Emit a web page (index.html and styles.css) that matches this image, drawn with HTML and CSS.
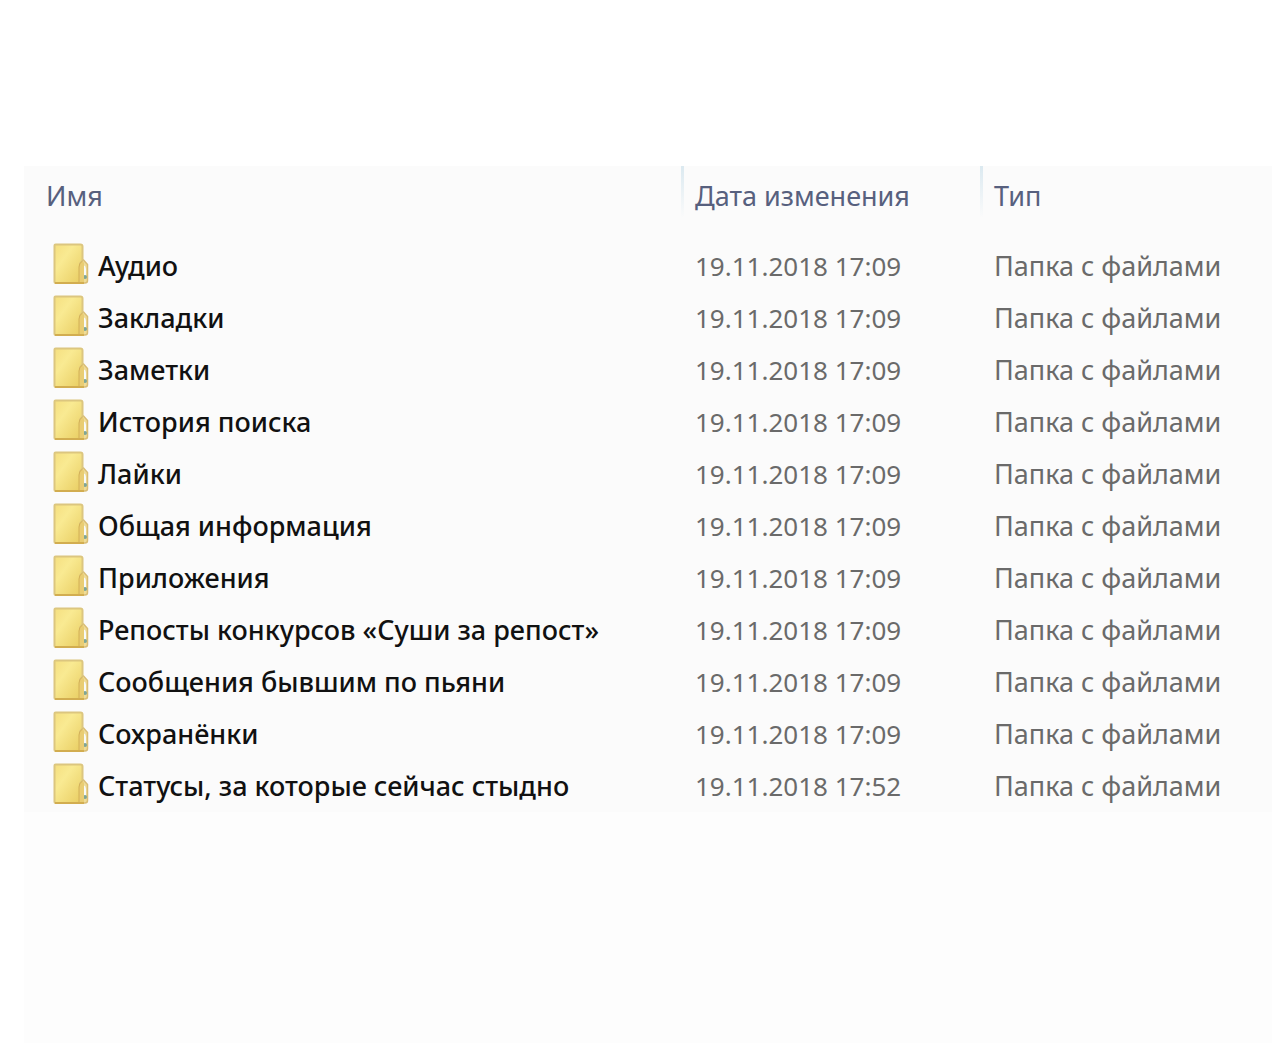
FILE: index.html
```html
<!DOCTYPE html>
<html lang="ru">
<head>
<meta charset="utf-8">
<meta name="viewport" content="width=device-width, initial-scale=1">
<title>Папки</title>
<link rel="stylesheet" href="styles.css">
</head>
<body>
<svg class="defs" aria-hidden="true">
  <defs>
    <linearGradient id="cover" x1="0" y1="0" x2="1" y2="1">
      <stop offset="0" stop-color="#f5df80"/>
      <stop offset="0.35" stop-color="#f9ea92"/>
      <stop offset="1" stop-color="#e8cc60"/>
    </linearGradient>
    <symbol id="folder" viewBox="0 0 36 42">
      <path d="M27 17h3.500l4 4.500v16q0 2.500-2.500 2.500h-5z" fill="#efdc98" stroke="#d9bd75" stroke-width="1.500"/>
      <path d="M30.500 22q2.500 1 2.500 4v8h-2.500z" fill="#f7fafa"/>
      <circle cx="32" cy="34" r="2" fill="#7fa596"/>
      <path d="M2.500 1.500h25q2 0 2 2v14l-2.500 3v19.500h-24.500q-1 0-1-1v-36.500q0-1 1-1z" fill="url(#cover)" stroke="#dcc67f" stroke-width="2"/>
      <path d="M26 40v-16q0-4 3.500-6l1.500 2v20z" fill="#e9cd73"/>
      <path d="M26 40v-16q0-4 3.500-6" fill="none" stroke="#d3b056"/>
      <path d="M2 40h29" fill="none" stroke="#d2ad50" stroke-width="2"/>
    </symbol>
  </defs>
</svg>
<main class="window">
  <div class="pane">
    <table class="files">
      <colgroup><col class="col-name"><col class="col-date"><col></colgroup>
      <thead>
        <tr><th scope="col">Имя</th><th scope="col">Дата изменения</th><th scope="col">Тип</th></tr>
      </thead>
      <tbody>
        <tr><td><div class="name"><svg class="icon" aria-hidden="true"><use href="#folder"/></svg>Аудио</div></td><td class="date">19.11.2018 17:09</td><td>Папка с файлами</td></tr>
        <tr><td><div class="name"><svg class="icon" aria-hidden="true"><use href="#folder"/></svg>Закладки</div></td><td class="date">19.11.2018 17:09</td><td>Папка с файлами</td></tr>
        <tr><td><div class="name"><svg class="icon" aria-hidden="true"><use href="#folder"/></svg>Заметки</div></td><td class="date">19.11.2018 17:09</td><td>Папка с файлами</td></tr>
        <tr><td><div class="name"><svg class="icon" aria-hidden="true"><use href="#folder"/></svg>История поиска</div></td><td class="date">19.11.2018 17:09</td><td>Папка с файлами</td></tr>
        <tr><td><div class="name"><svg class="icon" aria-hidden="true"><use href="#folder"/></svg>Лайки</div></td><td class="date">19.11.2018 17:09</td><td>Папка с файлами</td></tr>
        <tr><td><div class="name"><svg class="icon" aria-hidden="true"><use href="#folder"/></svg>Общая информация</div></td><td class="date">19.11.2018 17:09</td><td>Папка с файлами</td></tr>
        <tr><td><div class="name"><svg class="icon" aria-hidden="true"><use href="#folder"/></svg>Приложения</div></td><td class="date">19.11.2018 17:09</td><td>Папка с файлами</td></tr>
        <tr><td><div class="name"><svg class="icon" aria-hidden="true"><use href="#folder"/></svg>Репосты конкурсов «Суши за репост»</div></td><td class="date">19.11.2018 17:09</td><td>Папка с файлами</td></tr>
        <tr><td><div class="name"><svg class="icon" aria-hidden="true"><use href="#folder"/></svg>Сообщения бывшим по пьяни</div></td><td class="date">19.11.2018 17:09</td><td>Папка с файлами</td></tr>
        <tr><td><div class="name"><svg class="icon" aria-hidden="true"><use href="#folder"/></svg>Сохранёнки</div></td><td class="date">19.11.2018 17:09</td><td>Папка с файлами</td></tr>
        <tr><td><div class="name"><svg class="icon" aria-hidden="true"><use href="#folder"/></svg>Статусы, за которые сейчас стыдно</div></td><td class="date">19.11.2018 17:52</td><td>Папка с файлами</td></tr>
      </tbody>
    </table>
  </div>
</main>
</body>
</html>
```
FILE: styles.css
```css
body {
  margin: 0;
  background: #fff;
  font-family: "Noto Sans", "Open Sans", sans-serif;
  font-size: 27px;
  line-height: 36px;
}

.defs {
  display: block;
  width: 0;
  height: 0;
}

.window {
  box-sizing: border-box;
  display: flex;
  flex-direction: column;
  min-height: 100vh;
  padding: 166px 8px 10px 24px;
}

.pane {
  flex: 1;
  background: #fdfdfd;
}

.files {
  width: 100%;
  table-layout: fixed;
  border-collapse: collapse;
  background: #fbfbfb;
}

.col-name {
  width: 657px;
}

.col-date {
  width: 299px;
}

.files th {
  height: 74px;
  padding: 12px 0 0 14px;
  box-sizing: border-box;
  vertical-align: top;
  text-align: left;
  font-weight: 400;
  color: #57607e;
  background: linear-gradient(#dbe9f0, #fbfbfb) no-repeat 0 0 / 3px 52px;
}

.files th:first-child {
  padding-left: 22px;
  background: none;
}

.files td {
  height: 52px;
  padding: 0 0 0 14px;
  white-space: nowrap;
  color: #6a6a6a;
}

.files td:first-child {
  padding-left: 29px;
  color: #111;
  font-weight: 500;
}

.files .date {
  font-size: 26px;
}

.name {
  display: flex;
  align-items: center;
  gap: 9px;
}

.icon {
  flex: none;
  width: 36px;
  height: 42px;
  margin-bottom: 4px;
}
```
